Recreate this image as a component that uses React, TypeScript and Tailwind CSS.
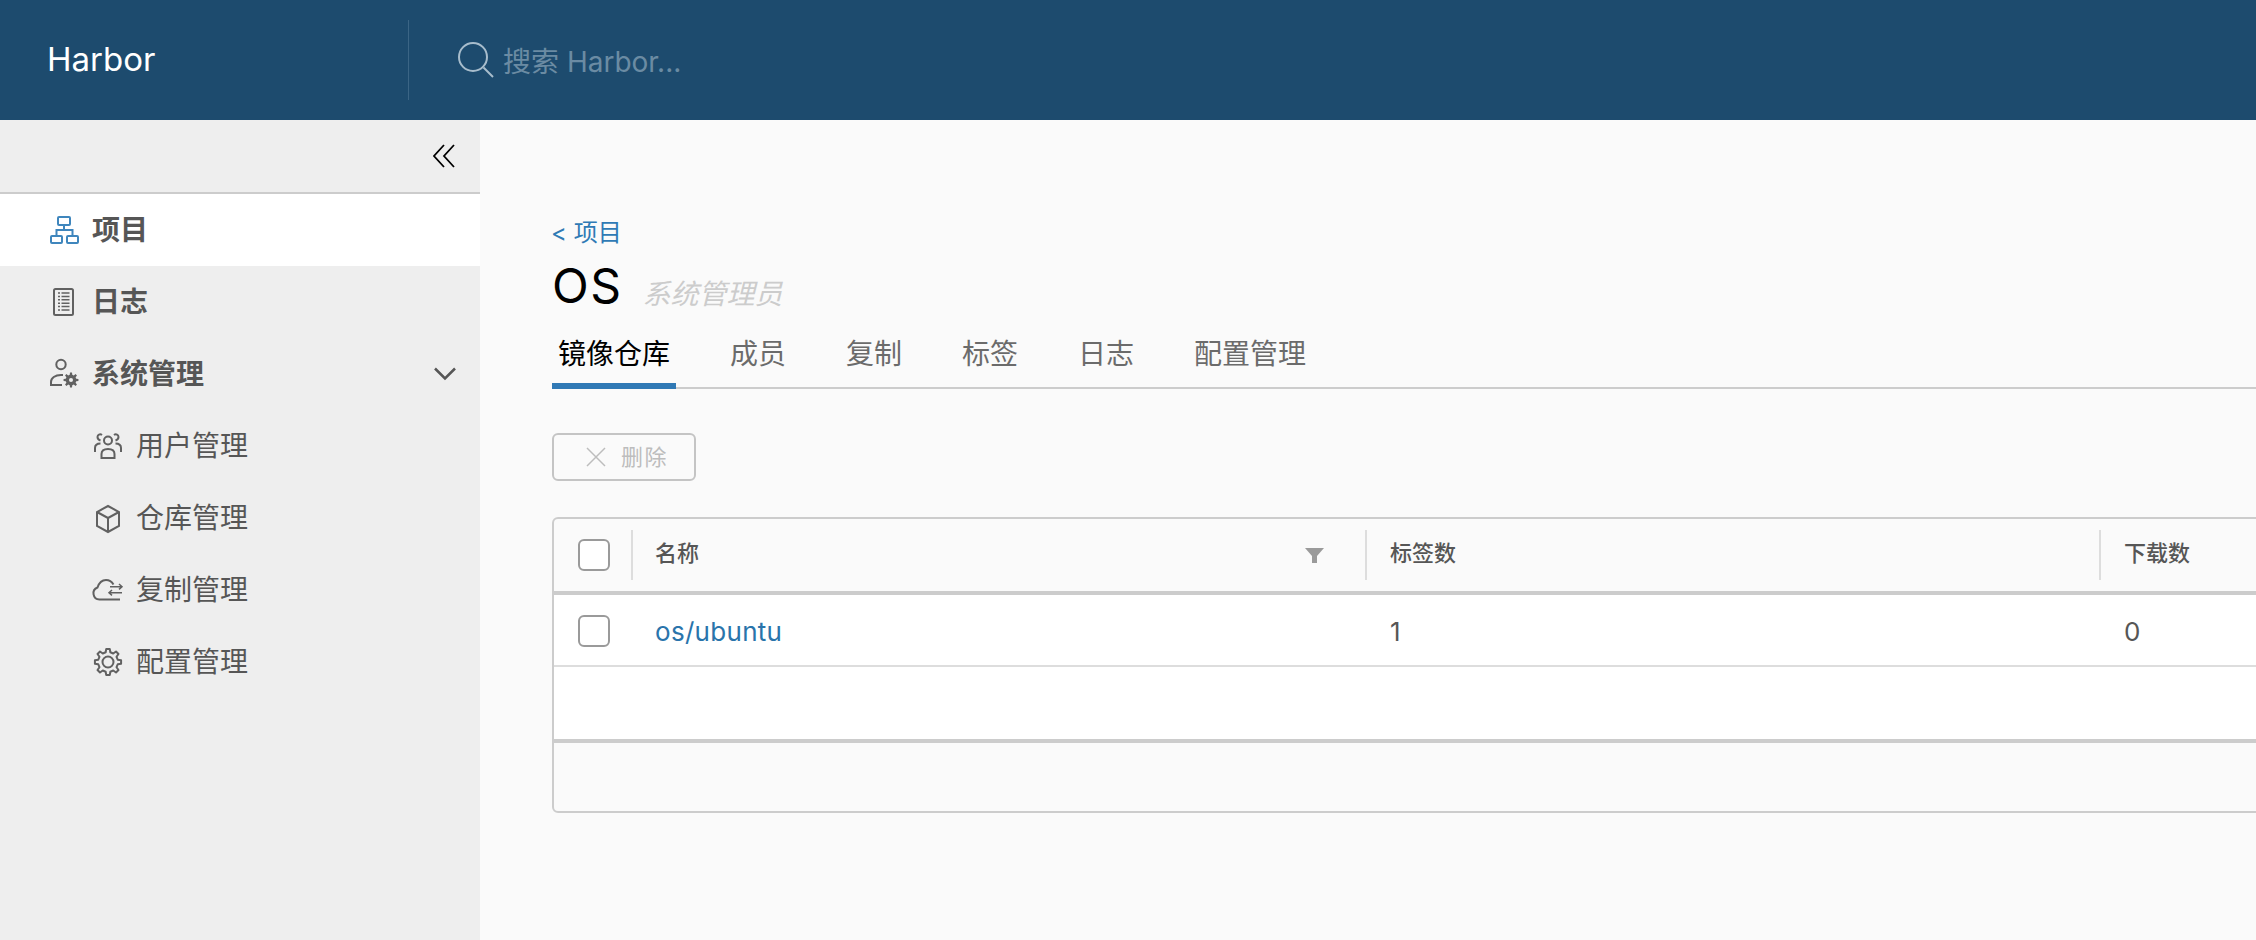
import React from "react";

const font = { fontFamily: '"Inter", "Noto Sans CJK SC", sans-serif' };

function gearPath(cx: number, cy: number, ro: number, ri: number, n: number) {
  const pts: string[] = [];
  const step = (Math.PI * 2) / n;
  for (let i = 0; i < n; i++) {
    const a = i * step - Math.PI / 2;
    const p = (r: number, d: number) =>
      `${(cx + r * Math.cos(a + d * step)).toFixed(2)} ${(cy + r * Math.sin(a + d * step)).toFixed(2)}`;
    pts.push(p(ri, -0.3), p(ro, -0.17), p(ro, 0.17), p(ri, 0.3));
  }
  return "M" + pts.join("L") + "Z";
}

const OrgIcon = (
  <>
    <rect x="12" y="5" width="12" height="8" rx="1" />
    <rect x="5" y="24" width="11" height="7" rx="1" />
    <rect x="21" y="24" width="11" height="7" rx="1" />
    <path d="M18 13v5M10.500 24v-6h16v6" />
  </>
);
const LogIcon = (
  <>
    <rect x="8" y="5" width="19" height="26" rx="1.500" />
    <path d="M12 9h2M12 12.400h2M12 15.800h2M12 19.200h2M12 22.600h2M12 26h2" strokeWidth="1.500" />
    <path d="M15.500 9h8M15.500 12.400h8M15.500 15.800h8M15.500 19.200h8M15.500 22.600h8M15.500 26h8" strokeWidth="1.500" />
  </>
);
const AdminIcon = (
  <>
    <circle cx="15" cy="8.500" r="4.700" />
    <path d="M16 29H5v-3c0-4 4-7 10-7h2" />
    <path d={gearPath(25, 24, 7.5, 5.4, 8)} fill="currentColor" stroke="none" />
    <circle cx="25" cy="24" r="2" fill="#eeeeee" stroke="none" />
  </>
);
const UsersIcon = (
  <>
    <circle cx="18" cy="12.500" r="4" />
    <path d="M11.500 30v-4c0-3 2.500-5 6.500-5s6.500 2 6.500 5v4z" />
    <path d="M12 7c-2-1.500-4.500-.2-4.500 2s1.500 3 3 3.500" />
    <path d="M24 7c2-1.500 4.500-.2 4.500 2s-1.500 3-3 3.500" />
    <path d="M5 24v-4c0-3 2-4.500 5.500-4.500M31 24v-4c0-3-2-4.500-5.500-4.500" />
  </>
);
const BoxIcon = (
  <>
    <path d="M18 6l11 6v14l-11 6-11-6V12z" />
    <path d="M7 12l11 6 11-6M18 18v14" />
  </>
);
const CloudIcon = (
  <>
    <path d="M30 27.500H9.500a6.200 6.200 0 0 1-2-12C9 11 12 8 16 8c3.500 0 6 2 7.500 4.500" />
    <path d="M20 14.700h12M29 12l3 2.700-3 2.700M32 20.700H19M22 18l-3 2.700 3 2.700" strokeWidth="1.500" />
  </>
);
const GearIcon = (
  <>
    <circle cx="18" cy="18" r="5.500" />
    <path d={gearPath(18, 18, 13.2, 10, 8)} strokeLinejoin="round" />
  </>
);

function NavItem({ icon, label, active, bold, sub, chevron }: { icon: React.ReactNode; label: string; active?: boolean; bold?: boolean; sub?: boolean; chevron?: boolean }) {
  return (
    <div className={`flex h-[72px] items-center ${sub ? "pl-[90px]" : "pl-[46px]"} ${active ? "bg-white" : ""} pr-6 text-[#565656] text-[28px]`}>
      <span className={`${active ? "text-[#3f86bd]" : "text-[#616161]"} mr-[10px] flex`}>
        <svg viewBox="0 0 36 36" fill="none" stroke="currentColor" strokeWidth="2" className="h-9 w-9">
          {icon}
        </svg>
      </span>
      <span className={bold ? "font-semibold" : ""}>{label}</span>
      {chevron && (
        <svg viewBox="0 0 22 14" className="ml-auto h-[14px] w-[22px] text-[#565656]" fill="none" stroke="currentColor" strokeWidth="2.500">
          <path d="M1 1.500l10 10 10-10" />
        </svg>
      )}
    </div>
  );
}

function Checkbox() {
  return <div className="h-8 w-8 rounded-[6px] border-2 border-[#9a9a9a] bg-white" />;
}

const tabs = ["成员", "复制", "标签", "日志", "配置管理"];

export default function App() {
  return (
    <div className="flex h-[940px] w-[2256px] flex-col overflow-hidden bg-[#fafafa]" style={font}>
      <header className="flex h-[120px] shrink-0 items-center bg-[#1d4b6e]">
        <div className="w-[408px] pb-[2px] pl-[47px] text-[33px] leading-none text-white">Harbor</div>
        <div className="h-[80px] w-[1px] bg-[#3b6585]" />
        <svg viewBox="0 0 38 38" className="ml-[48px] h-[38px] w-[38px] text-[#a8bdcc]" fill="none" stroke="currentColor" strokeWidth="2">
          <circle cx="16" cy="16" r="14" />
          <path d="M26.500 26.500l9.500 9.500" />
        </svg>
        <div className="ml-[8px] pt-[4px] text-[28px] text-[#6b8ba3]">搜索 Harbor...</div>
      </header>
      <div className="flex min-h-0 flex-1">
        <aside className="w-[480px] shrink-0 bg-[#eeeeee]">
          <div className="flex h-[74px] items-center justify-end border-b-[2px] border-[#cccccc] pr-[25px]">
            <svg viewBox="0 0 22 24" className="h-[24px] w-[22px] text-black" fill="none" stroke="currentColor" strokeWidth="1.800">
              <path d="M11 1L1 12l10 11M21 1L11 12l10 11" />
            </svg>
          </div>
          <NavItem icon={OrgIcon} label="项目" active bold />
          <NavItem icon={LogIcon} label="日志" bold />
          <NavItem icon={AdminIcon} label="系统管理" bold chevron />
          <NavItem icon={UsersIcon} label="用户管理" sub />
          <NavItem icon={BoxIcon} label="仓库管理" sub />
          <NavItem icon={CloudIcon} label="复制管理" sub />
          <NavItem icon={GearIcon} label="配置管理" sub />
        </aside>
        <main className="min-w-0 flex-1 overflow-hidden pl-[72px] pt-[96px]">
          <div className="-ml-[1px] text-[24px] leading-[34px] text-[#2f7ab5]">&lt; 项目</div>
          <div className="mt-[13px] flex h-[46px] items-center">
            <span className="text-[48px] leading-none tracking-[1.500px] text-black">OS</span>
            <span className="ml-[20px] mt-[16px] text-[28px] italic text-[#cccccc]">系统管理员</span>
          </div>
          <div className="mt-[22px] flex h-[58px] border-b-2 border-[#cccccc] text-[28px] text-[#6b6b6b]">
            <div className="h-[58px] border-b-[6px] border-[#3079b5] px-[6px] pt-[2px] text-black">镜像仓库</div>
            {tabs.map((t) => (
              <div key={t} className="ml-[48px] px-[6px] pt-[2px]">{t}</div>
            ))}
          </div>
          <button className="mt-[44px] flex h-12 w-[144px] items-center rounded-[6px] border-2 border-[#c4c4c4] pl-[32px] text-[22px] tracking-[1.500px] text-[#bdbdbd]">
            <svg viewBox="0 0 20 20" className="mr-[15px] h-[20px] w-[20px]" fill="none" stroke="currentColor" strokeWidth="1.500">
              <path d="M1 1l18 18M19 1L1 19" />
            </svg>
            删除
          </button>
          <div className="mt-[36px] h-[296px] w-[2400px] overflow-hidden rounded-[6px] border-2 border-[#cccccc] bg-[#fafafa]">
            <div className="flex h-[72px] items-center">
              <div className="flex w-[77px] justify-center pl-[3px]">
                <Checkbox />
              </div>
              <div className="relative flex h-[50px] w-[734px] border-l-2 border-[#dddddd] pl-[22px] pt-[7px] text-[22px] font-medium text-[#565656]">
                名称
                <svg viewBox="0 0 19 15" className="absolute right-[41px] top-[18px] h-[15px] w-[19px] text-[#9a9a9a]" fill="currentColor">
                  <path d="M0 0h19l-7 8v7H7V8z" />
                </svg>
              </div>
              <div className="h-[50px] w-[734px] border-l-2 border-[#dddddd] pl-[23px] pt-[7px] text-[22px] font-medium text-[#565656]">标签数</div>
              <div className="h-[50px] w-[734px] border-l-2 border-[#dddddd] pl-[23px] pt-[7px] text-[22px] font-medium text-[#565656]">下载数</div>
            </div>
            <div className="flex h-[152px] flex-col border-y-4 border-[#cccccc] bg-white">
              <div className="flex h-[72px] items-center border-b-2 border-[#dddddd] pt-[2px] text-[26px] text-[#565656]">
                <div className="flex w-[77px] justify-center pl-[3px]">
                  <Checkbox />
                </div>
                <div className="w-[734px] pl-[24px] tracking-[0.300px] text-[#2a74ab]">os/ubuntu</div>
                <div className="w-[734px] pl-[25px]">1</div>
                <div className="w-[734px] pl-[25px]">0</div>
              </div>
            </div>
          </div>
        </main>
      </div>
    </div>
  );
}
